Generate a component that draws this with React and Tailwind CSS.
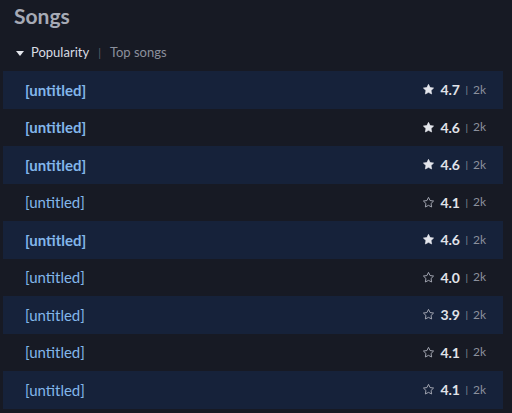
import { useState } from "react";

const songs = [
  { title: "[untitled]", rating: "4.7", plays: "2k", fav: true },
  { title: "[untitled]", rating: "4.6", plays: "2k", fav: true },
  { title: "[untitled]", rating: "4.6", plays: "2k", fav: true },
  { title: "[untitled]", rating: "4.1", plays: "2k", fav: false },
  { title: "[untitled]", rating: "4.6", plays: "2k", fav: true },
  { title: "[untitled]", rating: "4.0", plays: "2k", fav: false },
  { title: "[untitled]", rating: "3.9", plays: "2k", fav: false },
  { title: "[untitled]", rating: "4.1", plays: "2k", fav: false },
  { title: "[untitled]", rating: "4.1", plays: "2k", fav: false },
];

const Star = ({ filled }) => (
  <svg viewBox="0 0 24 24" className="w-[13px] h-[13px]">
    <path
      d="M12 2.5l2.9 5.9 6.5.9-4.7 4.6 1.1 6.4L12 17.3l-5.8 3 1.1-6.4-4.7-4.6 6.5-.9z"
      fill={filled ? "#e4e6ec" : "none"}
      stroke={filled ? "#e4e6ec" : "#a3a7b2"}
      strokeWidth={filled ? 1.2 : 1.8}
      strokeLinejoin="round"
    />
  </svg>
);

const App = () => {
  const [sort] = useState("Popularity");

  return (
    <div
      className="w-[512px] h-[413px] bg-[#171a24] overflow-hidden"
      style={{ fontFamily: "Lato, 'Open Sans', sans-serif" }}
    >
      <h2 className="pl-[14px] pt-[4px] text-[21px] leading-[24px] font-bold text-[#a6aab5]">
        Songs
      </h2>
      <div className="flex items-center pl-[16px] mt-[17px] h-[16px] text-[13px]">
        <svg viewBox="0 0 10 6" className="w-[8px] h-[5px] mr-[7px]">
          <path d="M0 0h10L5 6z" fill="#e4e6ec" />
        </svg>
        <span className="text-[#d9dce3]">{sort}</span>
        <span className="mx-[9px] text-[#5b606c] text-[11px]">|</span>
        <span className="text-[#8b909c]">Top songs</span>
      </div>
      <div className="mt-[10px] pl-[3px] pr-[9px]">
        {songs.map((s, i) => (
          <div
            key={i}
            className={`flex items-center h-[37.5px] pl-[22px] pr-[17px] ${
              i % 2 === 0 ? "bg-[#16223a]" : ""
            }`}
          >
            <span
              className={`flex-1 text-[15px] text-[#82b6ea] ${
                s.fav ? "font-bold" : ""
              }`}
            >
              {s.title}
            </span>
            <Star filled={s.fav} />
            <span className="ml-[5px] text-[14px] font-bold text-[#e1e3e9] w-[20px]">
              {s.rating}
            </span>
            <span className="mx-[5px] text-[10px] text-[#8b909c]">|</span>
            <span className="text-[12px] text-[#8b909c]">{s.plays}</span>
          </div>
        ))}
      </div>
    </div>
  );
};

export default App;
